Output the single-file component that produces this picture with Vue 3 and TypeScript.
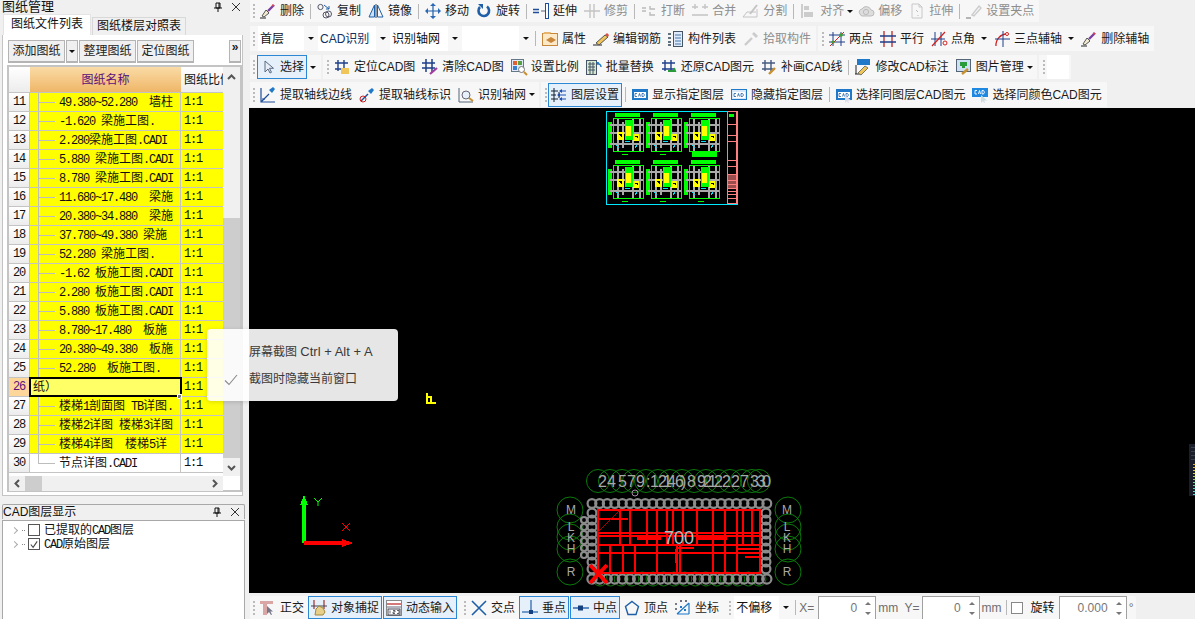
<script setup lang="ts">
type Item =
  | { k: 'grip' | 'sep' }
  | { k: 'btn'; i: string; t: string; off?: boolean; on?: boolean; caret?: boolean; drop?: boolean }
  | { k: 'combo'; t: string; w: number; blue?: boolean }
  | { k: 'text'; t: string; dim?: boolean }
  | { k: 'spin'; t: string; w: number }
  | { k: 'check' }
  | { k: 'blank' }

const s = (d: string, c: string, w = 1) => `<path d="${d}" stroke="${c}" stroke-width="${w}" fill="none"/>`
const f = (d: string, c: string) => `<path d="${d}" fill="${c}"/>`
const cadBox = (fill: string, txt: string) =>
  `<rect x="0.5" y="2.5" width="15" height="10" fill="${fill}" stroke="#1f78c8"/><rect x="2" y="5" width="12" height="6" fill="#fff"/><path d="M3 6.5h2M3 9.5h2M3 6.5v3M6.5 9.5l1-3 1 3M10 6.5v3h1.5l1-1.5-1-1.5z" stroke="${txt}" stroke-width=".8" fill="none"/>`
const axisGrid = (c: string) => s('M4 1v11M10 1v11M1 4h13M1 10h13', c, 1.4)

// toolbar icons, hand drawn on a 16x16 box
const icons: Record<string, string> = {
  broom: s('M0 15h6', '#222') + f('M2 13l4-6 3 3-5 4z', '#f4ecd0') + s('M2 13l4-6 3 3-5 4z', '#555') + s('M8 8l6-6', '#7b3fa0', 2.4) + s('M12 2l2 1', '#d45', 1.4),
  copy: `<circle cx="3.5" cy="4" r="2.6" stroke="#556" fill="none"/><circle cx="9" cy="12" r="3" stroke="#556" fill="none"/><circle cx="11.5" cy="11" r="3" stroke="#556" fill="none"/>` + s('M7 2l5 4M12 3v3h-3', '#1f5fa8'),
  mirror: s('M8 1v14', '#345', 1) + f('M6.5 2v12H1z', '#cfe0f4') + s('M6.5 2v12H1z', '#1f5fa8') + s('M9.5 2v12H15z', '#1f5fa8'),
  move: s('M8 1v14M1 8h14', '#1f5fa8', 1.2) + f('M8 0l3 3H5zM8 16l3-3H5zM0 8l3-3v6zM16 8l-3-3v6z', '#2a69b5'),
  rotate: s('M11 3.5A5.3 5.3 0 1 1 4 4', '#1f5fa8', 2.6) + f('M2 1h5v5z', '#1f5fa8'),
  extend: s('M0 6.5h6M0 9.5h6', '#1f4f9a', 1.4) + s('M8 8h4', '#667', 1) + `<rect x="12.5" y="0.5" width="3" height="15" fill="#fff" stroke="#1f4f9a"/>`,
  trim: s('M6 1v14M10 1v14M0 8h16', '#c4c4c4', 1.4),
  brk: s('M1 5h4M1 8h4M9 3v3h5M9 9v3h5', '#bbb', 1.4),
  merge: s('M0 4h6M10 4h6M0 12h16M3 1v5M13 1v5', '#c4c4c4', 1.4),
  split: s('M0 14h14V6M0 14l4-5h9', '#c4c4c4', 1) + s('M7 11l7-9', '#c4c4c4', 2),
  align: s('M2 1v14', '#bbb', 1.4) + `<rect x="4" y="3" width="5" height="4" fill="#ccc"/><rect x="4" y="9" width="9" height="5" fill="#ccc"/>`,
  offset: `<path d="M2 11a3 3 0 0 1 2-5 5 5 0 0 1 9 1 3 3 0 0 1 0 6H4a3 3 0 0 1-2-2z" fill="#ddd" stroke="#bbb"/>` + `<circle cx="8" cy="9" r="2.6" fill="none" stroke="#bbb"/>`,
  stretch: s('M3 1h7l3 3v11H3zM10 1v3h3', '#c8c8c8') + s('M7 7l2 2M9 12v1', '#bbb'),
  grip2: s('M0 15h5', '#999', 1.4) + s('M6 12l7-9 2 2-7 8z', '#ccc', 1.4),
  props: `<rect x="0.5" y="2.5" width="15" height="12" fill="#fbe9c8" stroke="#c8873c"/>` + f('M1 3h7l1-2H2z', '#e8b36b') + f('M4 9l5-3 5 3-5 3z', '#c8873c'),
  pencil: s('M0 14h9', '#222') + f('M3 12l9-8 3 2-9 8z', '#f0c65a') + s('M3 12l9-8 3 2-9 8z', '#555') + f('M12 4l2-2 2 2-1 2z', '#d8504a'),
  list: s('M0 3h3M0 7h3M0 11h3M0 14h3', '#345', 1.4) + `<rect x="5.5" y="0.5" width="9" height="15" fill="#dfeafa" stroke="#456"/>` + s('M7 4h6M7 7h6M7 10h6M7 13h6', '#47a'),
  pick: s('M2 14l7-7', '#ccc', 2.4) + f('M9 3l4 4 2-2-4-4z', '#ccc'),
  two: s('M4 1v14M12 1v14M0 4h16M0 11h16', '#1e3f8a') + s('M1 15L15 1', '#d02020') + `<circle cx="12" cy="4" r="1.8" fill="#3aa030"/><circle cx="4" cy="11" r="1.6" fill="#3aa030"/>`,
  para: s('M4 0v16M12 0v16', '#c02828', 1.3) + s('M0 5h16M0 11h16', '#1e3f8a', 1.3),
  angle: s('M4 1v14M10 1v14M0 8h14', '#1e3f8a') + s('M1 15L14 1', '#d02020', 1.2) + `<circle cx="14" cy="12" r="2" fill="none" stroke="#d02020"/>`,
  arc: s('M2 15A11 11 0 0 1 13 3', '#d02020', 1.3) + s('M9 0v16M1 8h15', '#1e3f8a') + `<circle cx="13" cy="3" r="1.5" fill="#fff" stroke="#d02020"/>`,
  cursor: f('M5 2v11l3-3 2 4 1.5-.7-2-4h4z', '#e8eef8') + s('M5 2v11l3-3 2 4 1.5-.7-2-4h4z', '#5a6a80'),
  locate: axisGrid('#1e3f8a') + f('M7 9h8v6H7z', '#f0c65a'),
  clear: s('M4 0v13M10 0v13M0 4h13M0 9h13', '#1e3f8a', 1.5) + s('M8 15l7-6', '#a03fa0', 2.2),
  scale: `<rect x="0.5" y="0.5" width="12" height="12" fill="#dfeafa" stroke="#678"/><rect x="2" y="2" width="4" height="4" fill="#e06030"/><rect x="7" y="2" width="4" height="4" fill="#5aa040"/><rect x="2" y="7" width="4" height="4" fill="#3a80d0"/>` + `<circle cx="10.5" cy="10.5" r="3" fill="#fff" stroke="#777"/>` + s('M13 13l3 3', '#c89030', 2),
  batch: `<rect x="0.5" y="1.5" width="10" height="14" fill="#d8e8d0" stroke="#456"/>` + s('M2 5h7M2 8h7M2 11h7M4 3v12M7 3v12', '#456') + s('M11 5a3 3 0 0 1 4 3', '#1f78c8', 1.4) + f('M10 3l3 0-1 3z', '#1f78c8'),
  restore: axisGrid('#1e3f8a') + s('M7 12h7l-1-3', '#2a9a3a', 2),
  redraw: axisGrid('#445a80') + s('M8 15l6-6', '#c89030', 2.4),
  editcad: s('M1 6v9M0 15h7', '#222') + `<rect x="2" y="0" width="13" height="6" fill="#1f78c8"/>` + f('M3 14l7-7 3 2-7 7z', '#f0c65a') + s('M3 14l7-7 3 2-7 7z', '#776'),
  image: `<rect x="0.5" y="0.5" width="14" height="12" fill="#cfe0f4" stroke="#567"/>` + f('M4 3h7v4H9v2H6V7H4z', '#2a9a3a') + s('M6 15l6-5', '#c89030', 2.4),
  axisEdge: s('M1 1v14h14M1 15L9 7', '#1f4f9a', 1.2) + f('M9 3l3 3 3-4-2-2z', '#1f78c8') + s('M2 12h3', '#1f4f9a'),
  axisMark: s('M2 14l7-7', '#1f4f9a', 1.4) + f('M9 4l3 3 3-4-2-2z', '#1f78c8') + `<circle cx="4" cy="12" r="3" fill="none" stroke="#d02020"/>`,
  axisFind: s('M1 1v14h14', '#567') + `<circle cx="8" cy="8" r="4" fill="#e8f0fa" stroke="#667"/>` + s('M11 11l4 3', '#c89030', 2),
  layers: s('M3 1v14M8 5v6', '#123') + s('M0 4h7M0 8h5M0 12h7', '#123') + s('M15 4H9M15 8H7M15 12H9', '#1f4fb0') + f('M8 4l3-2v4zM6 8l3-2v4zM8 12l3-2v4z', '#1f4fb0'),
  cadA: cadBox('#1f78c8', '#1f5fa8'),
  cadB: cadBox('#d8e8f8', '#1f5fa8'),
  cadC: cadBox('#1f78c8', '#1f5fa8') + f('M9 8v8l2-2 1 2 1-.5-1-2h3z', '#dde'),
  cadD: `<rect x="0" y="1" width="16" height="9" fill="#1f88e0"/><path d="M3 3.5h2M3 7h2M3 3.5V7M6.5 7l1-3.5 1 3.5M10 3.5V7h1.5l1-1.8-1-1.7z" stroke="#fff" stroke-width=".9" fill="none"/>` + f('M9 8v8l2-2 1 2 1-.5-1-2h3z', '#cdd'),
  ortho: f('M0 1h13v3H7v11H3V4H0z', '#d9a5a5') + f('M7 6v8l2-2 2 3 1-.5-1.6-3H13z', '#778'),
  snap: s('M3 0v9M13 0v9', '#a03030', 1.2) + s('M0 6h16', '#445', 1) + f('M4 15l1-6 3-3 4 2 2 4-2 3z', '#e8cf8a') + s('M4 15l1-6 3-3 4 2 2 4-2 3z', '#a08840', 1),
  dyn: `<rect x="0.5" y="0.5" width="15" height="15" fill="#fff" stroke="#888"/>` + s('M1 4h14', '#c04040', 1.4) + s('M1 7h14', '#667') + `<rect x="2" y="9" width="12" height="6" fill="#fff" stroke="#445"/>` + s('M4 10.5v3M7 10.5h2v1.5H7v1.5h2M11 10.5h2v3h-2', '#223', .7),
  cross: s('M1 1l14 14M15 1L1 15', '#1f5fa8', 1.6),
  perp: s('M9 0v12', '#1f5fa8', 1.2) + s('M0 12h16', '#1f5fa8', 1.2) + `<rect x="7" y="10" width="4" height="4" fill="#163f80"/>`,
  mid: s('M0 8h16', '#1f5fa8', 1.4) + `<rect x="5" y="5.5" width="5" height="5" fill="#163f80"/>`,
  vertex: s('M8 1.5l6.5 5-2.5 8H4l-2.5-8z', '#1f5fa8', 1.4),
  coord: `<path d="M2 14L14 3M2 14h12M14 3v11" stroke="#1f78c8" stroke-width="1.2" fill="none"/><path d="M1 3v2M1 8v2M5 1h2M10 1h2" stroke="#445" stroke-width="1.4"/><rect x="5" y="6" width="2" height="2" fill="#1f78c8"/><rect x="9" y="9" width="2" height="2" fill="#1f78c8"/>`,
}

const g: Item = { k: 'grip' }
const sep: Item = { k: 'sep' }
const b = (i: string, t: string, o: { off?: boolean; on?: boolean; caret?: boolean; drop?: boolean } = {}): Item => ({ k: 'btn', i, t, ...o })
const off = { off: true }

const rows: { cls: string; strips: Item[][] }[] = [
  {
    cls: 'r1',
    strips: [[
      g, b('broom', '删除'), sep, b('copy', '复制'), b('mirror', '镜像'), sep, b('move', '移动'), b('rotate', '旋转'), sep,
      b('extend', '延伸'), b('trim', '修剪', off), sep, b('brk', '打断', off), b('merge', '合并', off), b('split', '分割', off), sep,
      b('align', '对齐', { off: true, caret: true }), b('offset', '偏移', off), b('stretch', '拉伸', off), sep, b('grip2', '设置夹点', off),
    ]],
  },
  {
    cls: 'r2',
    strips: [
      [
        g, { k: 'combo', t: '首层', w: 59 }, { k: 'combo', t: 'CAD识别', w: 71, blue: true }, { k: 'combo', t: '识别轴网', w: 71 }, { k: 'combo', t: '', w: 70 },
        sep, b('props', '属性'), b('pencil', '编辑钢筋'), b('list', '构件列表'), b('pick', '拾取构件', off),
      ],
      [g, b('two', '两点'), b('para', '平行'), b('angle', '点角', { drop: true }), b('arc', '三点辅轴', { drop: true }), b('broom', '删除辅轴')],
    ],
  },
  {
    cls: 'r3',
    strips: [
      [g, b('cursor', '选择', { on: true, drop: true })],
      [
        g, b('locate', '定位CAD图'), b('clear', '清除CAD图'), b('scale', '设置比例'), b('batch', '批量替换'), b('restore', '还原CAD图元'),
        b('redraw', '补画CAD线'), sep, b('editcad', '修改CAD标注'), b('image', '图片管理', { caret: true }),
      ],
      [g, { k: 'blank' }],
    ],
  },
  {
    cls: 'r4',
    strips: [
      [g, b('axisEdge', '提取轴线边线'), b('axisMark', '提取轴线标识'), b('axisFind', '识别轴网', { caret: true })],
      [
        g, b('layers', '图层设置', { on: true }), sep, b('cadA', '显示指定图层'), b('cadB', '隐藏指定图层'), sep,
        b('cadC', '选择同图层CAD图元'), b('cadD', '选择同颜色CAD图元'),
      ],
    ],
  },
]

const statusStrip: Item[] = [
  g, b('ortho', '正交'), b('snap', '对象捕捉', { on: true }), b('dyn', '动态输入', { on: true }), g,
  b('cross', '交点'), b('perp', '垂点', { on: true }), b('mid', '中点', { on: true }), b('vertex', '顶点'), b('coord', '坐标'), g,
  { k: 'combo', t: '不偏移', w: 58 }, sep, { k: 'text', t: 'X=', dim: true }, { k: 'spin', t: '0', w: 58 }, { k: 'text', t: 'mm  Y=', dim: true },
  { k: 'spin', t: '0', w: 58 }, { k: 'text', t: 'mm', dim: true }, sep, { k: 'check' }, { k: 'text', t: '旋转' }, { k: 'spin', t: '0.000', w: 68 }, { k: 'text', t: '°', dim: true },
]

// drawing sheet rows in the left table
const sheetRows = [
  [11, '49.380~52.280  墙柱'], [12, '-1.620 梁施工图.'], [13, '2.280梁施工图.CADI'], [14, '5.880 梁施工图.CADI'],
  [15, '8.780 梁施工图.CADI'], [16, '11.680~17.480  梁施'], [17, '20.380~34.880  梁施'], [18, '37.780~49.380 梁施'],
  [19, '52.280 梁施工图.'], [20, '-1.62 板施工图.CADI'], [21, '2.280 板施工图.CADI'], [22, '5.880 板施工图.CADI'],
  [23, '8.780~17.480  板施'], [24, '20.380~49.380  板施'], [25, '52.280  板施工图.'], [26, '纸）'],
  [27, '楼梯1剖面图 TB详图.'], [28, '楼梯2详图 楼梯3详图'], [29, '楼梯4详图  楼梯5详'], [30, '节点详图.CADI'],
] as [number, string][]

// split so latin runs can use the narrow monospace and CJK the sans
const segs = (text: string) =>
  text.split(/([\x00-\x7f]+)/).filter(Boolean).map((t) => ({ t, lat: t.charCodeAt(0) < 128 }))

// CAD sheet at the top of the canvas
const plans = [
  { x: 606, y: 113 }, { x: 644, y: 113 }, { x: 682, y: 113 },
  { x: 606, y: 160 }, { x: 644, y: 160 }, { x: 682, y: 160 },
]
const titleRows = [124, 135, 141, 160, 166, 174, 180, 184, 188, 191, 194, 198]

// plan at the bottom of the canvas
const topNums = [
  [598, '2'], [607, '4'], [618, '5'], [627, '7'], [636, '9'], [646, ':'], [650, '1'], [658, '2'], [663, '1'], [667, '4'],
  [675, '6'], [681, ')'], [687, '8'], [697, '9'], [703, '2'], [708, '1'], [714, '2'], [722, '2'], [731, '2'], [740, '7'],
  [750, '3'], [757, '3'], [762, '0'],
] as [number, string][]
const topRings = [598, 610, 622, 634, 646, 658, 670, 682, 694, 706, 718, 730, 742, 752, 759]
const sideRings = [510, 527, 537, 549, 572]
const sideLabels = [[510, 'M'], [527, 'L'], [538, 'K'], [549, 'H'], [572, 'R']] as [number, string][]
const bandX = Array.from({ length: 24 }, (_, i) => 592 + i * 7.6)
const ringX = Array.from({ length: 16 }, (_, i) => 600 + i * 10.6)
const bandY = [513, 520, 527, 534, 541, 548, 555, 562, 569]
const redTop = [620, 630, 647, 657, 667, 673, 683, 697, 713, 725, 737, 743, 752]
const redLow = [610, 623, 635, 657, 677, 680, 713, 725, 737]
const redH = [533, 536, 545, 553]
const redShort = ['M738 549h22M745 557h14', 'M676 549v14', 'M678 548h16', 'M598 519h30']
const meterBars = Array.from({ length: 11 }, (_, i) => ({
  y: 464 + i * 3,
  c: ['#e8a030', '#e8b030', '#e0c040', '#d0d040', '#b0d850', '#90d860', '#70d880', '#60d890', '#50d8a0', '#50d8b0', '#50d8c0'][i],
}))
</script>

<template>
  <div class="app">
    <aside class="side">
      <div class="pane-title">
        <span>图纸管理</span>
        <span class="pane-btns">
          <svg width="10" height="10" viewBox="0 0 10 10"><path d="M3 1h4v5H3zM1 6h8M5 6v4M6 1v5" stroke="#111" fill="none" /></svg>
          <svg width="10" height="10" viewBox="0 0 10 10"><path d="M1 1l8 8M9 1L1 9" stroke="#333" fill="none" /></svg>
        </span>
      </div>
      <div class="tabs">
        <div class="tab active">图纸文件列表</div>
        <div class="tab">图纸楼层对照表</div>
      </div>
      <div class="tab-body">
        <div class="sheet-tools">
          <button class="tool">添加图纸</button>
          <button class="tool caret-btn"><i class="caret" /></button>
          <button class="tool">整理图纸</button>
          <button class="tool">定位图纸</button>
          <button class="tool more">»</button>
        </div>
        <div class="grid-wrap">
          <div class="grid-main">
            <div class="grid-cols">
              <div class="grid-head">
                <div class="hd-corner" />
                <div class="hd-name">图纸名称</div>
                <div class="hd-ratio">图纸比例</div>
              </div>
              <div v-for="[n, text] in sheetRows" :key="n" class="grid-row" :class="{ editing: n === 26, plain: n === 30 }">
                <div class="cell-no"><span class="lat">{{ n }}</span></div>
                <div class="cell-name">
                  <template v-if="n === 26">{{ text }}</template>
                  <template v-else>
                    <i class="tree-v" :class="{ last: n === 30 }" /><i class="tree-h" />
                    <span class="name-text"><span v-for="(p, i) in segs(text)" :key="i" :class="{ lat: p.lat }">{{ p.t }}</span></span>
                  </template>
                </div>
                <div class="cell-ratio"><span class="lat">1:1</span></div>
              </div>
            </div>
            <div class="vbar">
              <svg width="17" height="16" viewBox="0 0 17 16"><path d="M5 9l3.5-3.5L12 9" stroke="#555" stroke-width="2" fill="none" /></svg>
              <div class="vtrack"><div class="vthumb" /></div>
              <svg width="17" height="16" viewBox="0 0 17 16"><path d="M5 6l3.5 3.5L12 6" stroke="#555" stroke-width="2" fill="none" /></svg>
            </div>
          </div>
          <div class="hbar">
            <svg width="16" height="15" viewBox="0 0 16 15"><path d="M10 4L6.5 7.5 10 11" stroke="#555" stroke-width="2" fill="none" /></svg>
            <div class="hthumb" />
            <svg class="hend" width="16" height="15" viewBox="0 0 16 15"><path d="M6 4l3.5 3.5L6 11" stroke="#555" stroke-width="2" fill="none" /></svg>
          </div>
        </div>
      </div>
      <div class="pane-title second">
        <span>CAD图层显示</span>
        <span class="pane-btns">
          <svg width="10" height="10" viewBox="0 0 10 10"><path d="M3 1h4v5H3zM1 6h8M5 6v4M6 1v5" stroke="#111" fill="none" /></svg>
          <svg width="10" height="10" viewBox="0 0 10 10"><path d="M1 1l8 8M9 1L1 9" stroke="#333" fill="none" /></svg>
        </span>
      </div>
      <div class="layer-tree">
        <div class="layer-row">
          <i class="chev" /><i class="dots" /><span class="box" />
          <span><span v-for="(p, i) in segs('已提取的CAD图层')" :key="i" :class="{ lat: p.lat }">{{ p.t }}</span></span>
        </div>
        <div class="layer-row">
          <i class="chev" /><i class="dots" />
          <span class="box"><svg width="11" height="11" viewBox="0 0 11 11"><path d="M2 5.5l2.5 3L9 2" stroke="#444" stroke-width="1.2" fill="none" /></svg></span>
          <span><span v-for="(p, i) in segs('CAD原始图层')" :key="i" :class="{ lat: p.lat }">{{ p.t }}</span></span>
        </div>
      </div>
    </aside>

    <main class="work">
      <div class="bars">
        <div v-for="row in rows" :key="row.cls" class="bar-row" :class="row.cls">
          <div v-for="(strip, si) in row.strips" :key="si" class="strip">
            <template v-for="(it, ii) in strip" :key="ii">
              <i v-if="it.k === 'grip'" class="grip" />
              <i v-else-if="it.k === 'sep'" class="sep" />
              <div v-else-if="it.k === 'combo'" class="combo" :style="{ width: it.w + 'px' }">
                <span class="combo-text" :class="{ blue: it.blue }">{{ it.t }}</span><i class="caret" />
              </div>
              <div v-else-if="it.k === 'blank'" class="blank" />
              <template v-else-if="it.k === 'btn'">
                <div class="btn" :class="{ off: it.off, on: it.on }">
                  <svg class="ico" width="16" height="16" viewBox="0 0 16 16" v-html="icons[it.i]" />
                  <span>{{ it.t }}</span>
                </div>
                <i v-if="it.caret" class="caret plain" />
                <i v-if="it.drop" class="caret drop" />
              </template>
            </template>
          </div>
        </div>
      </div>

      <div class="canvas">
        <svg class="cad" viewBox="249 108 946 485" width="946" height="485" shape-rendering="crispEdges">
          <!-- sheet of six plans -->
          <rect x="606.5" y="111.5" width="131" height="93" fill="none" stroke="#00e8ff" />
          <g v-for="(p, i) in plans" :key="i" :transform="`translate(${p.x} ${p.y})`">
            <rect x="9" y="0" width="25" height="4" fill="#0f0" />
            <rect x="2" y="9" width="4" height="26" fill="#0f0" />
            <rect x="7.5" y="5.5" width="30" height="33" fill="none" stroke="#0f0" />
            <path d="M4 12h33M4 20h33M4 31h33M12 6v32M17 9v26M27 6v32M34 6v32" stroke="#aaa" stroke-width="2" />
            <rect x="19" y="7" width="8" height="20" fill="#0f0" />
            <rect x="20" y="13" width="5" height="10" fill="#ff0" />
            <rect x="11" y="19" width="7" height="8" fill="#ff0" />
            <rect x="27" y="21" width="6" height="7" fill="#ff0" />
            <path d="M13 21h2v3M29 23h2v2" stroke="#000" />
            <path d="M10 32l3 3M31 32l-2 3M19 28h5" stroke="#0df" />
            <path d="M16 41h6" stroke="#0f0" />
          </g>
          <rect x="692" y="152" width="25" height="5" fill="#0f0" />
          <rect x="727.5" y="111.5" width="9" height="92" fill="#000" stroke="#ff8080" />
          <path v-for="y in titleRows" :key="y" :d="`M728 ${y}h9`" stroke="#ff8080" />
          <rect x="729" y="114" width="5" height="3" fill="#0f0" />
          <rect x="728" y="174" width="8" height="14" fill="#ff8080" opacity=".6" />

          <!-- yellow marker -->
          <path d="M427 393v10h9M427 397h4v5" stroke="#ff0" stroke-width="2" fill="none" />

          <!-- UCS axes -->
          <path d="M304 543V503" stroke="#0f0" stroke-width="4" />
          <path d="M304 495l4 10h-8z" fill="#0f0" />
          <path d="M304 543h40" stroke="#f00" stroke-width="4" />
          <path d="M353 543l-11 4v-8z" fill="#f00" />
          <path d="M314 498l4 4 4-4M318 502v4" stroke="#0f0" fill="none" shape-rendering="auto" />
          <path d="M342 523l8 8M350 523l-8 8" stroke="#f00" fill="none" shape-rendering="auto" />

          <!-- floor plan -->
          <g shape-rendering="auto" fill="none" stroke="#0a7a0a">
            <circle v-for="x in topRings" :key="x" :cx="x" cy="481" r="11.5" />
            <circle v-for="y in sideRings" :key="'l' + y" cx="570" :cy="y" r="13" />
            <circle v-for="y in sideRings" :key="'r' + y" cx="788" :cy="y" r="13" />
            <circle v-for="x in ringX" :key="'bt' + x" :cx="x" cy="579" r="7" />
          </g>
          <circle cx="635" cy="493" r="3" fill="none" stroke="#a98aa9" shape-rendering="auto" />
          <g fill="#a8a8a8" font-family="'Liberation Sans', sans-serif" font-size="16" shape-rendering="auto">
            <text v-for="([x, t], i) in topNums" :key="i" :x="x" y="487">{{ t }}</text>
          </g>
          <g fill="#a8a8a8" font-family="'Liberation Sans', sans-serif" font-size="12" text-anchor="middle">
            <text v-for="[y, t] in sideLabels" :key="'sl' + y" x="571" :y="y + 4">{{ t }}</text>
            <text v-for="[y, t] in sideLabels" :key="'sr' + y" x="787" :y="y + 4">{{ t }}</text>
          </g>
          <!-- dimension bands round the plan -->
          <g fill="none" stroke="#8c8c8c" stroke-width="2.2" shape-rendering="auto">
            <circle v-for="x in bandX" :key="'a' + x" :cx="x" cy="503.5" r="4.4" />
            <circle v-for="x in bandX" :key="'b' + x" :cx="x" cy="579" r="4.6" />
            <circle v-for="y in bandY" :key="'c' + y" cx="592" :cy="y" r="4.4" />
            <circle v-for="y in bandY" :key="'d' + y" cx="766" :cy="y" r="4.4" />
            <circle v-for="y in bandY.slice(1, 7)" :key="'e' + y" cx="584" :cy="y" r="3" />
          </g>
          <rect x="598" y="510" width="162" height="63" fill="none" stroke="#f00" stroke-width="2" />
          <path v-for="x in redTop" :key="'v' + x" :d="`M${x} 510v35`" stroke="#f00" stroke-width="2" />
          <path v-for="x in redLow" :key="'l' + x" :d="`M${x} 545v28`" stroke="#f00" stroke-width="2" />
          <path v-for="y in redH" :key="'h' + y" :d="`M598 ${y}h162`" stroke="#f00" stroke-width="2" />
          <path v-for="(d, i) in redShort" :key="i" :d="d" stroke="#f00" stroke-width="2" fill="none" />
          <path d="M620 510L598 532" stroke="#a00" shape-rendering="auto" />
          <path d="M637 538h24M697 538h30" stroke="#f00" stroke-width="3" />
          <path d="M590 565l17 18M607 565l-17 18" stroke="#f00" stroke-width="4" shape-rendering="auto" />
          <text x="664" y="544" fill="#a9c2c4" font-family="'Liberation Sans', sans-serif" font-size="18" shape-rendering="auto">700</text>

          <!-- docked widget at the window edge -->
          <rect x="1189" y="444" width="6" height="52" fill="#1b1f2c" />
          <path d="M1191 447h4M1191 451h4M1191 455h4M1191 459h4" stroke="#3a3f4c" />
          <path v-for="m in meterBars" :key="m.y" :d="`M1193 ${m.y}h2`" :stroke="m.c" />
        </svg>
      </div>

      <div class="status">
        <div class="strip">
          <template v-for="(it, ii) in statusStrip" :key="ii">
            <i v-if="it.k === 'grip'" class="grip" />
            <i v-else-if="it.k === 'sep'" class="sep" />
            <div v-else-if="it.k === 'combo'" class="combo" :style="{ width: it.w + 'px' }">
              <span class="combo-text">{{ it.t }}</span><i class="caret" />
            </div>
            <span v-else-if="it.k === 'text'" class="st-text" :class="{ dim: it.dim }">{{ it.t }}</span>
            <span v-else-if="it.k === 'check'" class="box st-check" />
            <div v-else-if="it.k === 'spin'" class="spin" :style="{ width: it.w + 'px' }">
              <span class="spin-val">{{ it.t }}</span>
              <span class="spin-arrows">
                <svg width="8" height="5" viewBox="0 0 8 5"><path d="M1 4l3-3 3 3z" fill="#777" /></svg>
                <svg width="8" height="5" viewBox="0 0 8 5"><path d="M1 1l3 3 3-3z" fill="#777" /></svg>
              </span>
            </div>
            <div v-else-if="it.k === 'btn'" class="btn" :class="{ off: it.off, on: it.on }">
              <svg class="ico" width="16" height="16" viewBox="0 0 16 16" v-html="icons[it.i]" />
              <span>{{ it.t }}</span>
            </div>
          </template>
        </div>
      </div>
    </main>

    <div class="shot-menu">
      <div class="shot-row"><span>屏幕截图 <span class="shot-key">Ctrl + Alt + A</span></span></div>
      <div class="shot-row">
        <svg class="shot-check" width="14" height="12" viewBox="0 0 14 12"><path d="M1 6.5l4 4L13 1" stroke="#8a8a8a" stroke-width="1.1" fill="none" /></svg>
        <span>截图时隐藏当前窗口</span>
      </div>
    </div>
  </div>
</template>

<style>
html,
body {
  margin: 0;
  background: #f0f0f0;
}
</style>

<style scoped>
.app {
  position: relative;
  width: 1195px;
  height: 619px;
  overflow: hidden;
  display: grid;
  grid-template-columns: 249px 946px;
  background: #f0f0f0;
  color: #111;
  font: 12px/1 'Liberation Sans', 'Noto Sans CJK SC', sans-serif;
}

/* left dock */
.side {
  display: flex;
  flex-direction: column;
  height: 619px;
  padding: 0 4px 0 2px;
  box-sizing: border-box;
}
.pane-title {
  display: flex;
  align-items: center;
  justify-content: space-between;
  height: 13px;
  font-size: 13px;
  flex: none;
}
.pane-title.second {
  height: 15px;
  margin-top: 8px;
  font-size: 12px;
  border: 1px solid #a8a8a8;
  border-bottom: 0;
  border-radius: 2px 2px 0 0;
  box-sizing: border-box;
}
.pane-btns {
  display: flex;
  gap: 8px;
  padding-right: 4px;
}
.tabs {
  display: flex;
  align-items: flex-end;
  height: 22px;
  padding-left: 1px;
  flex: none;
}
.tab {
  height: 17px;
  line-height: 16px;
  padding: 0 4px;
  margin-left: 1px;
  border: 1px solid #d8d8d8;
  border-bottom: 0;
  box-sizing: content-box;
}
.tab.active {
  height: 20px;
  line-height: 19px;
  padding: 0 7px;
  margin-left: 0;
  background: #fff;
  border-color: #e4e4e4;
}
.tab-body {
  width: 241px;
  height: 461px;
  padding: 5px 0 3px 4px;
  background: #fff;
  border: 1px solid #c4c4c4;
  border-top: 0;
  box-sizing: border-box;
  display: flex;
  flex-direction: column;
  flex: none;
}
.sheet-tools {
  display: flex;
  gap: 1px;
  height: 23px;
  margin: 0 1px 2px 1px;
  flex: none;
}
.tool {
  height: 23px;
  width: 57px;
  padding: 0;
  font: inherit;
  color: #222;
  background: #f0f0f0;
  border: 1px solid #b4b4b4;
  border-width: 1px 1px 2px 1px;
  display: flex;
  align-items: center;
  justify-content: center;
}
.caret-btn {
  width: 12px;
}
.more {
  width: 12px;
  margin-left: auto;
  align-items: flex-start;
  font-size: 12px;
  font-weight: 700;
}
.caret {
  display: inline-block;
  width: 0;
  height: 0;
  border: 3px solid transparent;
  border-top: 3px solid #111;
  border-bottom: 0;
  flex: none;
}
.caret.plain {
  margin: 0 1px 0 -1px;
}
.caret.plain:last-child {
  margin-right: 2px;
}
.caret.drop {
  margin: 0 3px 0 2px;
}
.grid-wrap {
  flex: 1;
  border: 2px solid #c4c4c4;
  display: flex;
  flex-direction: column;
  min-height: 0;
}
.grid-main {
  display: flex;
  height: 409px;
  flex: none;
}
.grid-cols {
  width: 214px;
  overflow: hidden;
}
.grid-head {
  display: grid;
  grid-template-columns: 21px 151px 42px;
  height: 26px;
}
.hd-corner,
.hd-ratio {
  background: linear-gradient(#fff, #ececec);
  border-bottom: 1px solid #c4c4c4;
}
.hd-name {
  display: flex;
  align-items: center;
  justify-content: center;
  color: #5a0f7c;
  background: linear-gradient(#fadba6, #efb668);
  border-bottom: 1px solid #c4c4c4;
}
.hd-ratio {
  padding: 7px 0 0 3px;
  overflow: hidden;
  white-space: nowrap;
}
.grid-row {
  display: grid;
  grid-template-columns: 21px 151px 42px;
  height: 19px;
  background: #ff0;
  box-sizing: border-box;
  border-bottom: 1px solid #c4c4c4;
}
.grid-row.plain {
  background: #fff;
}
.cell-no {
  display: flex;
  align-items: center;
  justify-content: center;
  background: linear-gradient(#fff, #ececec);
  border-right: 1px solid #c4c4c4;
}
.cell-name {
  position: relative;
  display: flex;
  align-items: center;
  border-right: 1px solid #c4c4c4;
  white-space: pre;
  overflow: hidden;
}
.name-text {
  padding-left: 29px;
}
.cell-ratio {
  display: flex;
  align-items: center;
  padding-left: 3px;
}
.lat {
  font-family: 'Liberation Mono', monospace;
  font-size: 12px;
  letter-spacing: -1.2px;
}
.tree-v {
  position: absolute;
  left: 8px;
  top: 0;
  bottom: -1px;
  width: 1px;
  background: #bdbdbd;
}
.tree-v.last {
  bottom: 8px;
}
.tree-h {
  position: absolute;
  left: 9px;
  top: 9px;
  width: 16px;
  height: 1px;
  background: #bdbdbd;
}
.editing .cell-no {
  background: #fdd79a;
  color: #5a0f7c;
}
.editing .cell-name {
  background: #ffff66;
  outline: 2px solid #000;
  outline-offset: -1px;
  padding-left: 3px;
  overflow: visible;
}
.editing .cell-name::after {
  content: '';
  position: absolute;
  right: -2px;
  bottom: -3px;
  width: 5px;
  height: 5px;
  background: #777;
  border: 1px solid #fff;
  box-sizing: border-box;
}
.vbar {
  width: 17px;
  background: #f0f0f0;
  display: flex;
  flex-direction: column;
  align-items: center;
  padding-top: 3px;
  box-sizing: border-box;
}
.vtrack {
  flex: 1;
  width: 100%;
  position: relative;
}
.vthumb {
  position: absolute;
  left: 0;
  right: 0;
  top: 132px;
  bottom: 2px;
  background: #cdcdcd;
}
.hbar {
  flex: 1;
  display: flex;
  align-items: center;
  background: #f0f0f0;
  margin-right: 17px;
}
.hthumb {
  width: 17px;
  height: 100%;
  background: #cdcdcd;
}
.hend {
  margin-left: auto;
}
.layer-tree {
  flex: 1;
  padding: 2px 0 0 7px;
  background: #fff;
  border: 1px solid #a8a8a8;
  border-width: 1px 1px 0;
  box-sizing: border-box;
  margin-top: 1px;
}
.layer-row {
  display: flex;
  align-items: center;
  height: 14px;
  font-size: 12px;
}
.chev {
  width: 4px;
  height: 4px;
  margin: 0 5px 0 2px;
  border: solid #aaa;
  border-width: 1.5px 1.5px 0 0;
  transform: rotate(45deg);
  flex: none;
}
.dots {
  width: 4px;
  height: 1px;
  margin-right: 2px;
  background: repeating-linear-gradient(90deg, #888 0 1px, transparent 1px 2px);
  flex: none;
}
.box {
  width: 12px;
  height: 12px;
  margin-right: 4px;
  border: 1px solid #555;
  background: #fff;
  box-sizing: border-box;
  display: inline-flex;
  flex: none;
}

/* toolbars */
.work {
  display: flex;
  flex-direction: column;
  height: 619px;
}
.bars {
  height: 108px;
  flex: none;
}
.bar-row {
  display: flex;
  gap: 2px;
  padding-left: 1px;
}
.r1 {
  height: 22px;
  margin-bottom: 4px;
}
.r2 {
  height: 25px;
  margin-bottom: 4px;
}
.r3 {
  height: 24px;
  margin-bottom: 3px;
}
.r4 {
  height: 25px;
}
.strip {
  display: flex;
  align-items: center;
  gap: 1px;
  padding: 0 2px 0 4px;
  background: #f7f7f7;
}
.strip:first-child {
  padding-left: 3px;
}
.grip {
  width: 2px;
  height: 14px;
  margin-right: 1px;
  background: repeating-linear-gradient(#bbb 0 2px, transparent 2px 4px);
  flex: none;
}
.btn + .grip {
  margin-left: 6px;
}
.grip + .combo {
  margin-left: 1px;
}
.sep {
  width: 1px;
  height: 15px;
  margin: 0 2px;
  background: #b8b8b8;
  flex: none;
}
.btn {
  display: flex;
  align-items: center;
  gap: 4px;
  height: 100%;
  padding: 0 3px;
  box-sizing: border-box;
  white-space: nowrap;
  color: #1a1a1a;
}
.r3 .btn,
.r4 .btn {
  height: 24px;
}
.btn.off {
  color: #8e8e8e;
}
.btn.on {
  background: #e6f0fa;
  border: 1px solid #2c88d4;
  padding: 0 2px;
}
.r4 .btn.on {
  margin-left: -1px;
}
.ico {
  flex: none;
  overflow: visible;
}
.combo {
  display: flex;
  align-items: center;
  justify-content: space-between;
  height: 100%;
  padding-right: 3px;
  box-sizing: border-box;
  white-space: nowrap;
}
.combo-text {
  flex: 1;
  height: 100%;
  margin-right: 4px;
  padding-left: 2px;
  display: flex;
  align-items: center;
  background: #fff;
}
.combo-text.blue {
  color: #12305f;
}
.blank {
  width: 22px;
  height: 24px;
  background: #fff;
}

/* canvas */
.canvas {
  flex: 1;
  background: #000;
  position: relative;
  overflow: hidden;
}
.cad {
  position: absolute;
  inset: 0;
  display: block;
}

/* status bar */
.status {
  height: 26px;
  flex: none;
  display: flex;
  padding-top: 3px;
  box-sizing: border-box;
}
.status .strip {
  height: 23px;
  margin-left: 1px;
  border-radius: 3px 3px 0 0;
}
.st-text {
  padding: 0 1px;
  white-space: pre;
}
.st-text.dim {
  color: #6e6e6e;
}
.sep + .st-text {
  margin-left: -1px;
  padding-right: 3px;
}
.box + .st-text {
  padding-right: 3px;
}
.st-check {
  margin: 0 6px 0 1px;
  border-color: #888;
}
.spin {
  height: 23px;
  display: flex;
  align-items: center;
  justify-content: flex-end;
  gap: 7px;
  padding-right: 3px;
  background: #fff;
  border: 1px solid #a0a0a0;
  border-bottom: 0;
  box-sizing: border-box;
  color: #777;
}
.spin-arrows {
  display: flex;
  flex-direction: column;
  gap: 5px;
}

/* screenshot tool popup over everything */
.shot-menu {
  position: absolute;
  left: 207px;
  top: 329px;
  width: 191px;
  height: 72px;
  padding: 8px 0;
  box-sizing: border-box;
  border-radius: 4px;
  background: rgba(255, 255, 255, 0.9);
  box-shadow: 0 1px 4px rgba(0, 0, 0, 0.15);
  color: #3a3a3a;
  font-size: 12px;
  display: flex;
  flex-direction: column;
  justify-content: space-around;
}
.shot-row {
  position: relative;
  padding-left: 42px;
}
.shot-key {
  font-size: 13px;
}
.shot-check {
  position: absolute;
  left: 17px;
  top: 1px;
}
</style>
